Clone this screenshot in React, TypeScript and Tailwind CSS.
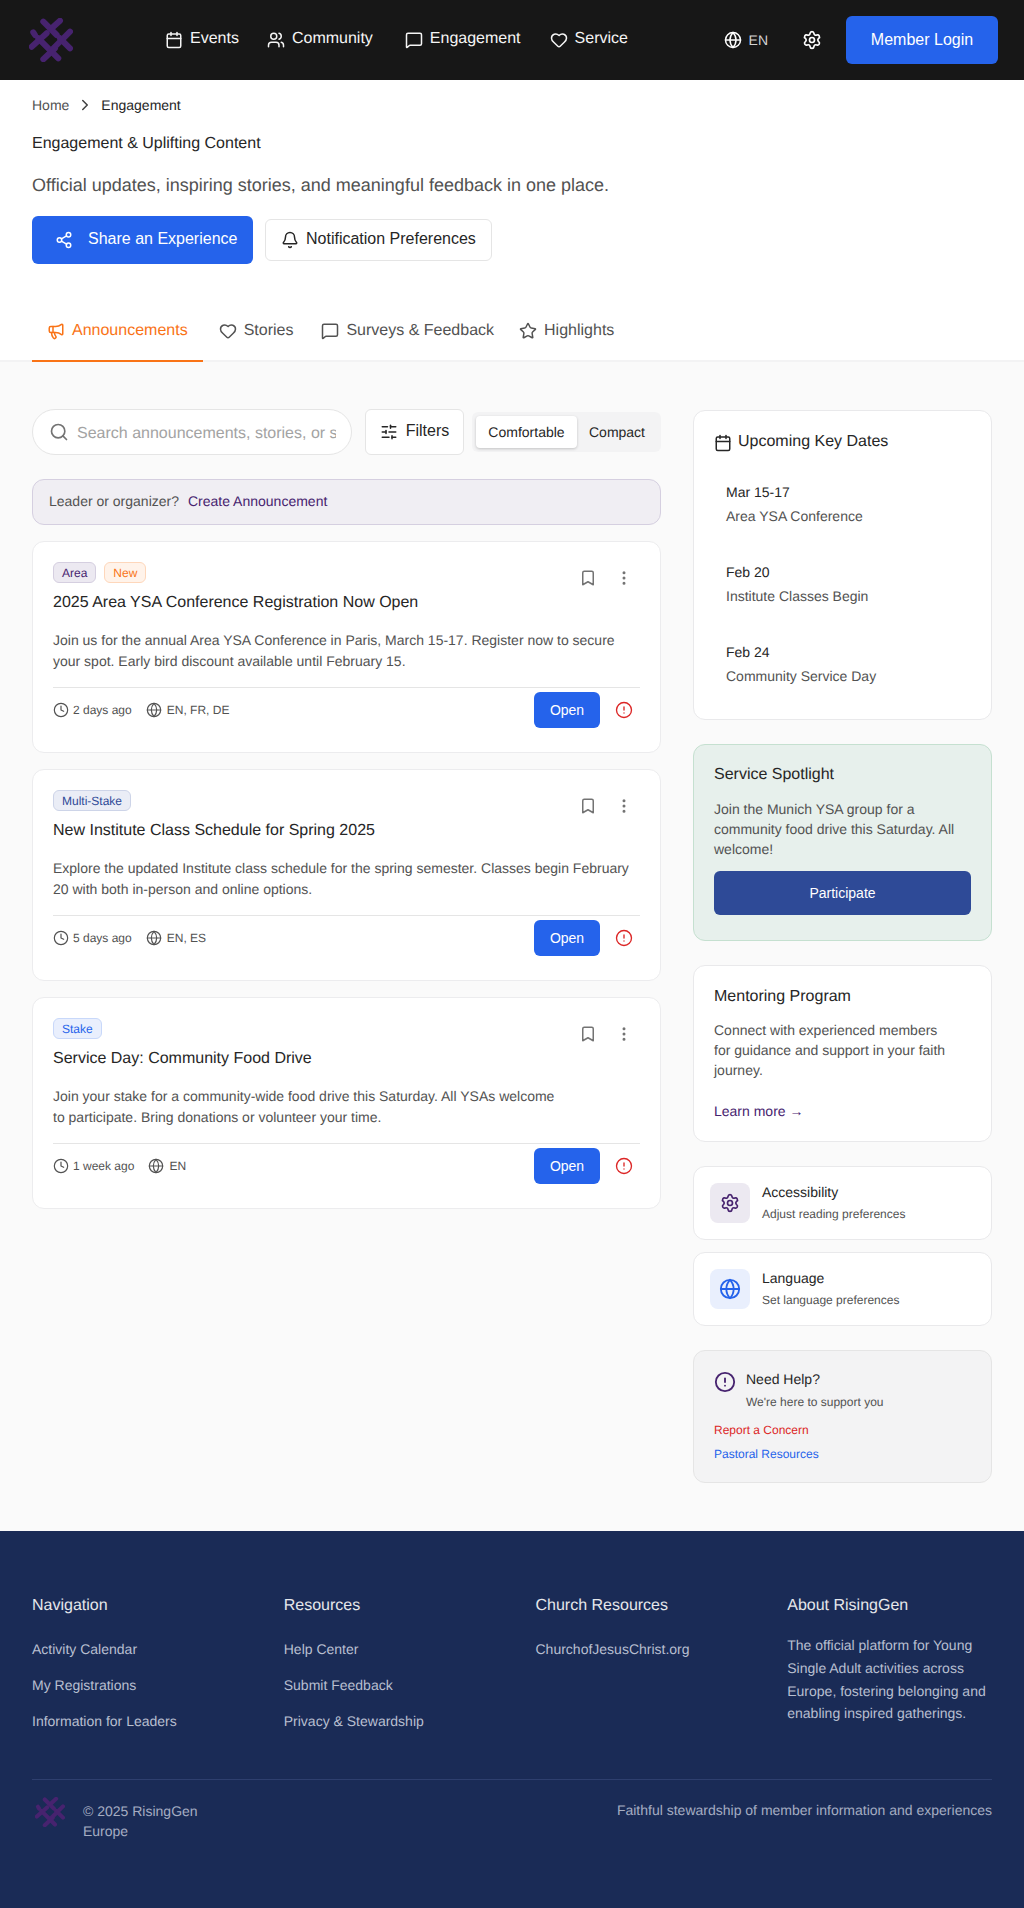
import React from 'react';
import { Calendar, Users, MessageSquare, Heart, Globe, Settings, Megaphone, Star, Share2, Bell, Search, SlidersHorizontal, Bookmark, EllipsisVertical, Clock, CircleAlert, ChevronRight } from 'lucide-react';

function Logo({ className }: { className: string }) {
  const segs = [
    [14.3, 3.7, 27.7, 17], [31, 2.7, 22.7, 10.3], [4.3, 14.3, 6, 17], [2.7, 28.7, 17.7, 15.3],
    [9.3, 20.3, 29.3, 40.3], [41, 13.7, 22.7, 32], [31, 20.3, 41, 30.3], [26, 30.3, 14.3, 41.3],
  ];
  return (
    <svg viewBox="0 0 44 44" className={className} fill="none" stroke="#47236f" strokeWidth="6" strokeLinecap="round">
      {segs.map((s, i) => <line key={i} x1={s[0]} y1={s[1]} x2={s[2]} y2={s[3]} />)}
    </svg>
  );
}

function NavItem({ icon, label, className }: { icon: React.ReactNode; label: string; className: string }) {
  return (
    <a className={`flex items-center gap-[7px] text-[#f5f5f5] text-base leading-6 ${className}`}>
      {icon}
      <span className="-mt-[2px]">{label}</span>
    </a>
  );
}

function Tag({ label, cls }: { label: string; cls: string }) {
  return <span className={`inline-flex h-[21px] items-center rounded-md border px-2 text-xs ${cls}`}>{label}</span>;
}

const cards = [
  {
    tags: [
      { label: 'Area', cls: 'bg-[#ece9f1] border-[#d5cfe0] text-[#47236f]' },
      { label: 'New', cls: 'bg-[#fff3ea] border-[#fed7bb] text-[#f97316]' },
    ],
    title: '2025 Area YSA Conference Registration Now Open',
    body: ['Join us for the annual Area YSA Conference in Paris, March 15-17. Register now to secure', 'your spot. Early bird discount available until February 15.'],
    time: '2 days ago',
    langs: 'EN, FR, DE',
  },
  {
    tags: [{ label: 'Multi-Stake', cls: 'bg-[#eaedf6] border-[#cdd4e8] text-[#2e4a97]' }],
    title: 'New Institute Class Schedule for Spring 2025',
    body: ['Explore the updated Institute class schedule for the spring semester. Classes begin February', '20 with both in-person and online options.'],
    time: '5 days ago',
    langs: 'EN, ES',
  },
  {
    tags: [{ label: 'Stake', cls: 'bg-[#e9effd] border-[#c8d8fa] text-[#2563eb]' }],
    title: 'Service Day: Community Food Drive',
    body: ['Join your stake for a community-wide food drive this Saturday. All YSAs welcome', 'to participate. Bring donations or volunteer your time.'],
    time: '1 week ago',
    langs: 'EN',
  },
];

function Card({ c }: { c: (typeof cards)[number] }) {
  return (
    <article className="rounded-xl border border-[#ececee] bg-white px-5 pt-5 h-[212px]">
      <div className="flex justify-between">
        <div>
          <div className="flex gap-2">
            {c.tags.map((t) => <Tag key={t.label} label={t.label} cls={t.cls} />)}
          </div>
          <h3 className="mt-2 text-base leading-6 text-[#262626]">{c.title}</h3>
        </div>
        <div className="flex items-start gap-[18px] pt-[7px] pr-[7px] text-[#737373]">
          <Bookmark size={18} />
          <EllipsisVertical size={18} />
        </div>
      </div>
      <p className="mt-[15px] text-sm leading-[20.5px] text-[#525252]">
        {c.body[0]}
        <br />
        {c.body[1]}
      </p>
      <div className="mt-[16px] flex items-center justify-between border-t border-[#e5e5e5] pt-[4px]">
        <div className="flex items-center gap-[14px] text-xs text-[#525252]">
          <span className="flex items-center gap-[4px]"><Clock size={16} strokeWidth={1.8} />{c.time}</span>
          <span className="flex items-center gap-[5px]"><Globe size={16} strokeWidth={1.8} />{c.langs}</span>
        </div>
        <div className="flex items-center gap-[15px] pr-[7px]">
          <button className="h-9 w-[66px] rounded-md bg-[#2563eb] text-sm text-white">Open</button>
          <CircleAlert size={18} strokeWidth={1.8} className="text-[#dc2626]" />
        </div>
      </div>
    </article>
  );
}

function DateRow({ d, t, cls }: { d: string; t: string; cls: string }) {
  return (
    <div className={cls}>
      <div className="text-sm leading-5 text-[#262626]">{d}</div>
      <div className="mt-1 text-sm leading-5 text-[#525252]">{t}</div>
    </div>
  );
}

function Shortcut({ icon, iconBg, title, sub }: { icon: React.ReactNode; iconBg: string; title: string; sub: string }) {
  return (
    <div className="flex h-[74px] items-center gap-3 rounded-xl border border-[#e9e9eb] bg-white pl-4">
      <span className={`flex h-10 w-10 items-center justify-center rounded-lg ${iconBg}`}>{icon}</span>
      <div className="-mt-[1px]">
        <div className="text-sm leading-5 text-[#262626]">{title}</div>
        <div className="mt-[3px] text-xs leading-[18px] text-[#525252]">{sub}</div>
      </div>
    </div>
  );
}

function FooterCol({ head, links }: { head: string; links: string[] }) {
  return (
    <div>
      <h4 className="text-base leading-6 text-[#e5e7eb]">{head}</h4>
      <ul className="mt-[21px] flex flex-col gap-[16px]">
        {links.map((l) => <li key={l} className="text-sm leading-5 text-[#b8bfd0]">{l}</li>)}
      </ul>
    </div>
  );
}

export default function App() {
  return (
    <div className="min-h-[1908px] bg-[#fafafa] font-['Liberation_Sans',Arial,sans-serif] [text-rendering:geometricPrecision] flex flex-col">
      <header className="flex h-20 items-center bg-[#171717] pl-[29px] pr-[26px]">
        <Logo className="h-11 w-11 shrink-0" />
        <nav className="ml-[92px] flex items-center">
          <NavItem className="" icon={<Calendar size={18} />} label="Events" />
          <NavItem className="ml-[28px]" icon={<Users size={18} />} label="Community" />
          <NavItem className="ml-[32px]" icon={<MessageSquare size={18} />} label="Engagement" />
          <NavItem className="ml-[29px]" icon={<Heart size={18} />} label="Service" />
        </nav>
        <div className="ml-auto flex items-center">
          <span className="flex items-center gap-[7px] text-sm text-[#d4d4d4]"><Globe size={18} className="text-white" />EN</span>
          <Settings size={20} className="ml-[34px] text-white" />
          <button className="ml-6 h-12 w-[152px] rounded-md bg-[#2563eb] text-base text-white">Member Login</button>
        </div>
      </header>

      <section className="bg-white px-8 pt-[15px]">
        <div className="flex items-center text-sm leading-5">
          <span className="text-[#525252]">Home</span>
          <ChevronRight size={18} className="mx-[7px] text-[#404040]" />
          <span className="text-[#262626]">Engagement</span>
        </div>
        <h1 className="mt-[17px] text-base leading-6 text-[#262626]">Engagement &amp; Uplifting Content</h1>
        <p className="mt-[15px] text-lg leading-7 text-[#525252]">Official updates, inspiring stories, and meaningful feedback in one place.</p>
        <div className="mt-[17px] flex items-center gap-3">
          <button className="flex h-12 w-[221px] items-center gap-[15px] rounded-md bg-[#2563eb] pl-[23px] text-base text-white"><Share2 size={18} /><span className="-mt-[2px]">Share an Experience</span></button>
          <button className="flex h-[42px] w-[227px] items-center gap-[7px] rounded-md border border-[#e5e5e5] bg-white pl-[15px] text-base text-[#262626]"><Bell size={18} /><span className="-mt-[2px]">Notification Preferences</span></button>
        </div>
        <div className="-mx-8 mt-[38px] flex border-b-2 border-[#f3f3f4] px-8 h-[60px]">
          <div className="flex h-[60px] items-center gap-[7px] border-b-2 border-[#f97316] px-[15px] text-base text-[#f97316]"><Megaphone size={18} />Announcements</div>
          <div className="flex h-[58px] items-center gap-[7px] pl-[16px] text-base text-[#525252]"><Heart size={18} />Stories</div>
          <div className="flex h-[58px] items-center gap-[7px] pl-[28px] text-base text-[#525252]"><MessageSquare size={18} />Surveys &amp; Feedback</div>
          <div className="flex h-[58px] items-center gap-[7px] pl-[25px] text-base text-[#525252]"><Star size={18} />Highlights</div>
        </div>
      </section>

      <main className="flex flex-1 gap-8 px-8 pt-[47px]">
        <div className="w-[629px] shrink-0">
          <div className="flex items-center">
            <div className="flex h-[46px] w-[320px] items-center gap-2 overflow-hidden rounded-full border border-[#e5e5e5] bg-white pl-[16px] pr-[15px]">
              <Search size={20} className="shrink-0 text-[#737373]" />
              <span className="mt-[3px] overflow-hidden whitespace-nowrap text-base text-[#a3a3a3]">Search announcements, stories, or surveys...</span>
            </div>
            <button className="ml-[13px] flex h-[46px] w-[99px] items-center justify-center gap-2 rounded-md border border-[#e5e5e5] bg-white text-base text-[#262626]"><SlidersHorizontal size={18} /><span className="-mt-[2px]">Filters</span></button>
            <div className="ml-2 flex h-[40px] w-[189px] items-center rounded-md bg-[#f3f3f4] p-1">
              <span className="flex h-8 w-[101px] items-center justify-center rounded bg-white pb-[1px] text-sm text-[#262626] shadow-[0_1px_3px_rgba(0,0,0,0.2)]">Comfortable</span>
              <span className="flex h-8 flex-1 items-center justify-center pb-[1px] text-sm text-[#262626]">Compact</span>
            </div>
          </div>
          <div className="mt-6 flex h-[46px] items-center gap-[9px] rounded-xl border border-[#d5cfe0] bg-[#f0eef3] pb-[2px] pl-4 text-sm text-[#525252]">
            <span>Leader or organizer?</span>
            <span className="text-[#47236f]">Create Announcement</span>
          </div>
          <div className="mt-4 flex flex-col gap-4">
            {cards.map((c) => <Card key={c.title} c={c} />)}
          </div>
        </div>

        <aside className="flex w-[299px] shrink-0 flex-col pt-[1px]">
          <div className="h-[310px] rounded-xl border border-[#e9e9eb] bg-white pl-5 pt-[19px]">
            <div className="flex items-center gap-[6px] text-base leading-6 text-[#262626]"><Calendar size={18} className="mt-[2px]" />Upcoming Key Dates</div>
            <DateRow cls="ml-[12px] mt-[28px]" d="Mar 15-17" t="Area YSA Conference" />
            <DateRow cls="ml-[12px] mt-[36px]" d="Feb 20" t="Institute Classes Begin" />
            <DateRow cls="ml-[12px] mt-[36px]" d="Feb 24" t="Community Service Day" />
          </div>
          <div className="mt-6 h-[197px] rounded-xl border border-[#c5e0d0] bg-[#e7f0ec] px-5 pt-[18px]">
            <h3 className="text-base leading-6 text-[#262626]">Service Spotlight</h3>
            <p className="mt-3 text-sm leading-5 text-[#525252]">Join the Munich YSA group for a community food drive this Saturday. All welcome!</p>
            <button className="mt-3 h-11 w-full rounded-md bg-[#2e4a97] text-sm text-white">Participate</button>
          </div>
          <div className="mt-6 h-[177px] rounded-xl border border-[#e9e9eb] bg-white px-5 pt-[19px]">
            <h3 className="text-base leading-6 text-[#262626]">Mentoring Program</h3>
            <p className="mt-[11px] w-[240px] text-sm leading-5 text-[#525252]">Connect with experienced members for guidance and support in your faith journey.</p>
            <div className="mt-[21px] text-sm leading-5 text-[#47236f]">Learn more →</div>
          </div>
          <div className="mt-6 flex flex-col gap-3">
            <Shortcut icon={<Settings size={20} className="text-[#47236f]" />} iconBg="bg-[#ece9f1]" title="Accessibility" sub="Adjust reading preferences" />
            <Shortcut icon={<Globe size={22} className="text-[#2563eb]" />} iconBg="bg-[#e9effd]" title="Language" sub="Set language preferences" />
          </div>
          <div className="mt-6 h-[133px] rounded-xl border border-[#e5e5e5] bg-[#f3f3f4] px-5 pt-[18px]">
            <div className="flex gap-[10px]">
              <CircleAlert size={22} className="mt-[2px] text-[#47236f]" />
              <div>
                <div className="text-sm leading-5 text-[#262626]">Need Help?</div>
                <div className="mt-[4px] text-xs leading-[18px] text-[#525252]">We're here to support you</div>
              </div>
            </div>
            <div className="mt-[11px] text-xs leading-4 text-[#dc2626]">Report a Concern</div>
            <div className="mt-2 text-xs leading-4 text-[#2563eb]">Pastoral Resources</div>
          </div>
        </aside>
      </main>

      <footer className="mt-[48px] h-[378px] border-b border-[#5a6585] bg-[#1a2b56] px-8 pt-[63px]">
        <div className="grid grid-cols-4 gap-x-[47px] h-[185px]">
          <FooterCol head="Navigation" links={['Activity Calendar', 'My Registrations', 'Information for Leaders']} />
          <FooterCol head="Resources" links={['Help Center', 'Submit Feedback', 'Privacy & Stewardship']} />
          <FooterCol head="Church Resources" links={['ChurchofJesusChrist.org']} />
          <div className="w-[205px]">
            <h4 className="text-base leading-6 text-[#e5e7eb]">About RisingGen</h4>
            <p className="mt-4 text-sm leading-[22.75px] text-[#b8bfd0]">The official platform for Young Single Adult activities across Europe, fostering belonging and enabling inspired gatherings.</p>
          </div>
        </div>
        <div className="flex items-start justify-between border-t border-[#2e3f6e] pt-4">
          <div className="flex items-start">
            <Logo className="ml-[3px] mt-[1px] h-[30px] w-[30px] shrink-0" />
            <div className="ml-[18px] mt-[5px] text-sm leading-5 text-[#a5adc2]">© 2025 RisingGen<br />Europe</div>
          </div>
          <div className="mt-1 text-sm leading-5 text-[#a5adc2]">Faithful stewardship of member information and experiences</div>
        </div>
      </footer>
    </div>
  );
}
